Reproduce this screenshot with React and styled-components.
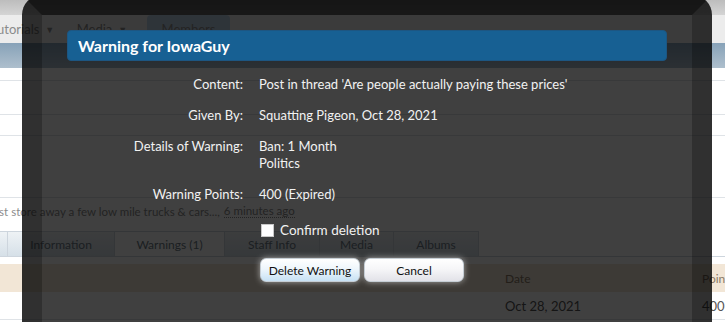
import styled, { createGlobalStyle } from "styled-components";

const GlobalStyle = createGlobalStyle`
  html, body {
    margin: 0;
    padding: 0;
    background: #fff;
    overflow: hidden;
  }
  body {
    font-family: Lato, "Liberation Sans", sans-serif;
  }
`;

const Page = styled.div`
  position: relative;
  width: 725px;
  height: 322px;
  overflow: hidden;
  background: #fff;
  font-size: 13px;
  color: #333;
`;

/* ---------- page behind the overlay ---------- */

const PageTop = styled.div`
  height: 15px;
  background: linear-gradient(#bdbdbd, #d4d4d4);
`;

const NavBar = styled.div`
  height: 28px;
  display: flex;
  align-items: stretch;
  background: #ececec;
  margin-left: -12px;
`;

const NavTab = styled.div`
  width: ${(p) => p.$w}px;
  display: flex;
  align-items: center;
  justify-content: center;
  gap: 6px;
  color: #8a8a8a;
  font-size: 13px;
  background: ${(p) => (p.$active ? "#b9cfe3" : "transparent")};
  border-radius: ${(p) => (p.$active ? "4px 4px 0 0" : "0")};

  span {
    font-size: 9px;
  }
`;

const SubNav = styled.div`
  height: 25px;
  background: linear-gradient(#87a2b8, #aebfcd);
`;

const Rule = styled.div`
  height: ${(p) => p.$h}px;
  border-bottom: 1px solid #dfe3e7;
  box-sizing: border-box;
`;

const StatusLine = styled.div`
  height: 26px;
  display: flex;
  align-items: center;
  margin-left: -12px;
  font-size: 11.5px;
  color: #8c8c8c;
  white-space: nowrap;

  a {
    color: #8c8c8c;
    text-decoration: none;
    border-bottom: 1px dotted #8c8c8c;
    margin-left: 4px;
  }
`;

const Tabs = styled.div`
  display: flex;
  height: 25px;
  margin-top: 7px;
  margin-left: -2px;
  border-bottom: 1px solid #cdd5dd;
`;

const Tab = styled.div`
  width: ${(p) => p.$w}px;
  box-sizing: border-box;
  display: flex;
  align-items: center;
  justify-content: center;
  font-size: 12px;
  color: #6d7a86;
  border: 1px solid #cdd5dd;
  border-bottom: none;
  margin-right: -1px;
  background: ${(p) =>
    p.$active ? "#fff" : "linear-gradient(#eef2f5, #d6e0e8)"};
`;

const Table = styled.div`
  margin-top: 7px;
  display: grid;
  grid-template-columns: 505px 197px 1fr;
`;

const HeadCell = styled.div`
  height: 28px;
  display: flex;
  align-items: center;
  background: #f2e6d6;
  color: #8c7a66;
  font-size: 12px;
`;

const Cell = styled.div`
  height: 28px;
  display: flex;
  align-items: center;
  border-bottom: 1px solid #dfe3e7;
  box-sizing: border-box;
  color: #555;
  font-size: 13px;
`;

/* ---------- overlay ---------- */

const Overlay = styled.div`
  position: absolute;
  top: -5px;
  left: 22px;
  width: 690px;
  min-height: 380px;
  box-sizing: border-box;
  padding: 15px 25px;
  background: rgba(0, 0, 0, 0.75);
  border: 20px solid rgba(0, 0, 0, 0.25);
  border-top-color: rgba(0, 0, 0, 0.55);
  border-radius: 20px;
  color: #f2f2f2;
`;

const Heading = styled.h2`
  margin: 0 0 8px;
  padding: 5px 10px;
  background: #176093;
  border: 1px solid #1d5682;
  border-radius: 4px;
  color: #fff;
  font-size: 16px;
  line-height: 19px;
  font-weight: bold;
`;

const Form = styled.dl`
  margin: 0;
  display: grid;
  grid-template-columns: 176px 1fr;
  column-gap: 16px;
  font-size: 13px;
  line-height: 17px;
`;

const Label = styled.dt`
  padding: 7px 0;
  text-align: right;
`;

const Value = styled.dd`
  margin: 0;
  padding: 7px 0;
`;

const CheckRow = styled.label`
  grid-column: 2;
  margin-top: 12px;
  display: flex;
  align-items: center;
  gap: 6px;
  font-size: 13.5px;
  line-height: 17px;
  padding-left: 2px;
`;

const Box = styled.span`
  width: 13px;
  height: 13px;
  box-sizing: border-box;
  background: #fff;
  border: 1px solid #c8c8c8;
`;

const ButtonRow = styled.div`
  grid-column: 2;
  margin-top: 19px;
  display: flex;
  gap: 4px;
  padding-left: 1px;
`;

const Button = styled.button`
  width: 100px;
  height: 24px;
  padding: 0;
  border: 1px solid #c5cdd4;
  border-radius: 6px;
  font-family: inherit;
  font-size: 12px;
  color: #111;
  background: ${(p) =>
    p.$primary
      ? "linear-gradient(#ffffff, #eef6fc 45%, #c7e1f4)"
      : "linear-gradient(#ffffff, #f6f6f8 45%, #e2e2e8)"};
  box-shadow: 0 0 6px rgba(255, 255, 255, 0.55);
`;

export default function App() {
  return (
    <Page>
      <GlobalStyle />
      <PageTop />
      <NavBar>
        <NavTab $w={69}>
          Tutorials <span>▼</span>
        </NavTab>
        <NavTab $w={90}>
          Media <span>▼</span>
        </NavTab>
        <NavTab $w={83} $active>
          Members
        </NavTab>
      </NavBar>
      <SubNav />
      <Rule $h={13} />
      <Rule $h={34} />
      <Rule $h={21} />
      <Rule $h={62} />
      <StatusLine>
        Just store away a few low mile trucks &amp; cars..., <a>6 minutes ago</a>
      </StatusLine>
      <Tabs>
        <Tab $w={10} />
        <Tab $w={108}>Information</Tab>
        <Tab $w={111} $active>
          Warnings (1)
        </Tab>
        <Tab $w={96}>Staff Info</Tab>
        <Tab $w={75}>Media</Tab>
        <Tab $w={86}>Albums</Tab>
      </Tabs>
      <Table>
        <HeadCell />
        <HeadCell>Date</HeadCell>
        <HeadCell>Points</HeadCell>
        <Cell />
        <Cell>Oct 28, 2021</Cell>
        <Cell>400</Cell>
      </Table>

      <Overlay>
        <Heading>Warning for IowaGuy</Heading>
        <Form>
          <Label>Content:</Label>
          <Value>Post in thread 'Are people actually paying these prices'</Value>
          <Label>Given By:</Label>
          <Value>Squatting Pigeon, Oct 28, 2021</Value>
          <Label>Details of Warning:</Label>
          <Value>
            Ban: 1 Month
            <br />
            Politics
          </Value>
          <Label>Warning Points:</Label>
          <Value>400 (Expired)</Value>
          <CheckRow>
            <Box />
            Confirm deletion
          </CheckRow>
          <ButtonRow>
            <Button $primary>Delete Warning</Button>
            <Button>Cancel</Button>
          </ButtonRow>
        </Form>
      </Overlay>
    </Page>
  );
}
